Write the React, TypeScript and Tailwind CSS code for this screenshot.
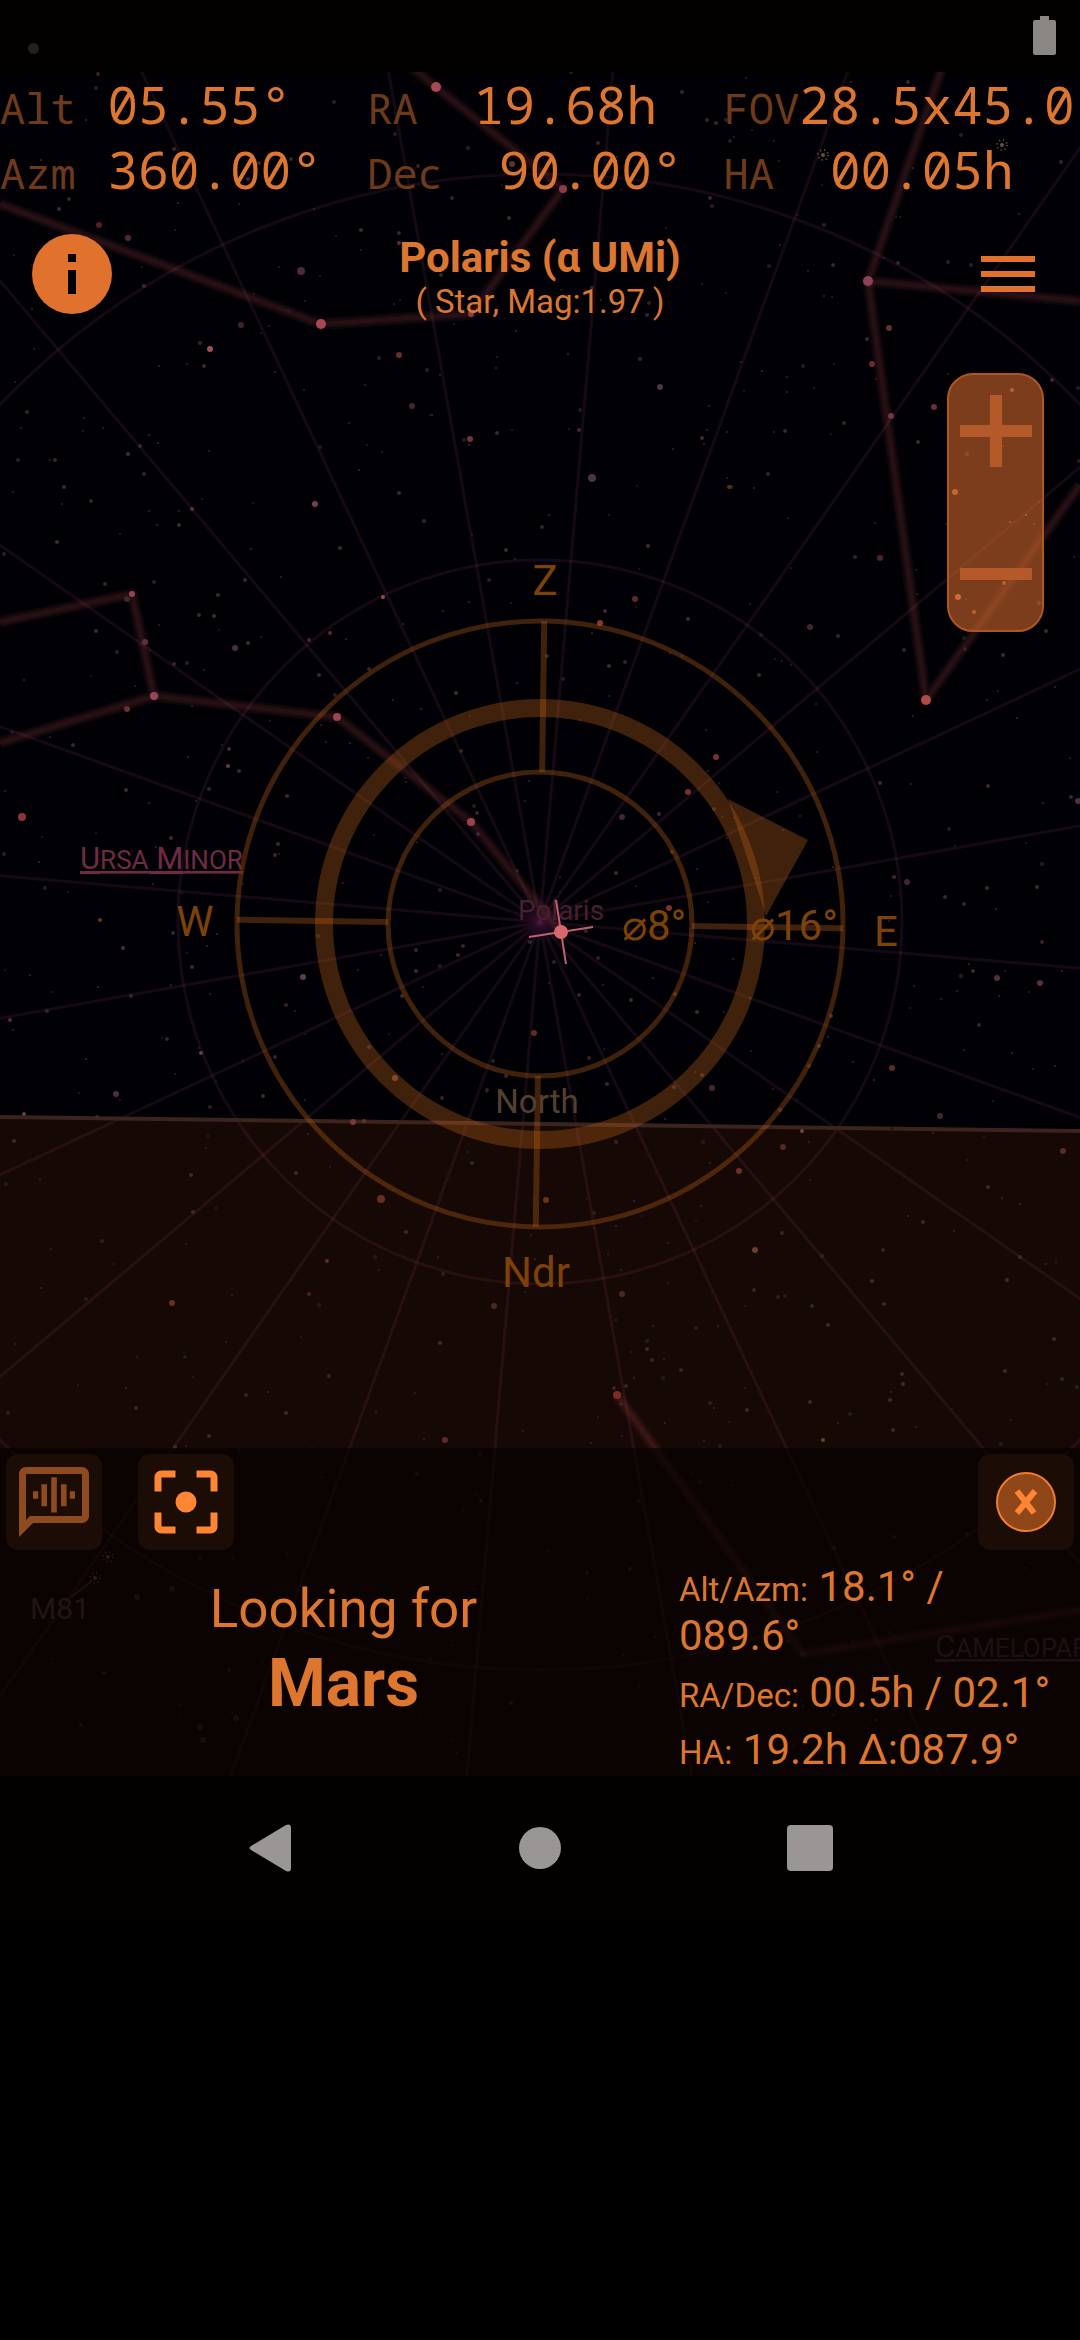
import React from "react";

type Point = [number, number];
type Star = [number, number, number, string?];

const POLE: Point = [540, 922];

const hourLines = Array.from({ length: 24 }, (_, i) => {
  const a = ((4.9 + i * 15) * Math.PI) / 180;
  return [POLE[0] + Math.cos(a) * 1300, POLE[1] + Math.sin(a) * 1300] as Point;
});

const constellations = [
  "405,62 436,87 563,189 471,314 321,324 0,204",
  "943,65 868,281 1080,301",
  "868,281 926,700 1080,485",
  "0,622 132,594 154,696 0,743",
  "154,696 337,717 471,822 561,932",
  "617,1395 803,1654 1080,1610",
];

const brightStars: Star[] = [
  [436, 87, 5, "#a84852"], [563, 189, 4, "#8e3c44"], [471, 314, 3, "#8e3c44"], [321, 324, 5, "#a84852"],
  [868, 281, 5, "#8c4258"], [926, 700, 5, "#b24a48"], [132, 594, 3, "#8e4850"], [154, 696, 4, "#94465a"],
  [337, 717, 4, "#9c4250"], [471, 822, 4, "#9c4250"], [478, 834, 2], [617, 1395, 4, "#7a2c26"],
  [210, 349, 3, "#9a5054"], [22, 817, 4, "#8a3436"], [315, 504, 3, "#70404c"], [383, 597, 2, "#a04a4a"],
  [470, 439, 3, "#70343c"], [412, 406, 3], [399, 355, 3, "#60302c"], [204, 366, 2], [432, 415, 1],
  [301, 271, 4, "#4a2a38"], [128, 238, 3, "#502a34"], [99, 225, 3, "#502222"], [241, 325, 3, "#44202a"],
  [59, 209, 2], [361, 230, 2], [309, 640, 2], [497, 433, 2], [144, 286, 2], [41, 160, 1], [399, 493, 2],
  [340, 548, 2], [399, 243, 2, "#603030"], [509, 218, 2], [512, 164, 3, "#603030"], [248, 179, 2],
  [592, 478, 4, "#4c3444"], [660, 387, 3, "#4c3444"], [889, 328, 3, "#5e3428"], [872, 364, 3, "#6a2c2c"],
  [934, 407, 3, "#6a303a"], [891, 416, 3, "#70384a"], [918, 442, 2], [880, 558, 3, "#4c2430"],
  [635, 599, 3, "#602a2c"], [600, 623, 3, "#84382c"], [605, 611, 2], [810, 627, 3], [688, 619, 2],
  [716, 757, 3, "#7a302c"], [688, 792, 3, "#7a302c"], [659, 814, 2], [622, 817, 3], [616, 873, 2],
  [609, 666, 2], [759, 675, 2], [648, 546, 2], [729, 487, 2, "#5a3020"], [702, 438, 2], [579, 430, 2],
  [1052, 380, 2], [955, 492, 3, "#a06038"], [958, 597, 3, "#c8603c"], [1012, 390, 2, "#985030"],
  [1004, 583, 2, "#985030"], [1010, 522, 1, "#985030"], [1026, 515, 1, "#985030"], [974, 612, 2, "#985030"],
  [1046, 631, 2], [1003, 655, 2], [1078, 801, 3, "#4e3040"], [1071, 797, 2], [880, 783, 2],
  [988, 786, 2], [907, 882, 3], [894, 877, 2], [945, 897, 2], [987, 888, 2], [1037, 887, 2],
  [669, 908, 3, "#7a342c"], [973, 971, 2], [997, 978, 3, "#54303c"], [1040, 983, 3, "#54303c"],
  [892, 1068, 3, "#5e2a2a"], [940, 1116, 3], [712, 1088, 3], [697, 1012, 2], [631, 1000, 2],
  [831, 1016, 2], [819, 1046, 2], [702, 1075, 2], [802, 1131, 2, "#74404a"], [783, 1147, 3, "#58281e"],
  [739, 1171, 3, "#6a3020"], [607, 1084, 2], [534, 1033, 3, "#662a20"], [546, 1200, 3, "#6a3410"],
  [755, 1250, 3, "#6a3c34"], [622, 1294, 3, "#4a2824"], [647, 1349, 2], [884, 1304, 2], [828, 1325, 2],
  [1063, 1151, 3, "#5a2c24"], [988, 1187, 2], [1020, 1257, 2], [1054, 1339, 2], [1007, 1280, 2],
  [902, 1374, 2], [903, 1384, 2], [890, 1400, 2], [893, 1430, 2], [810, 1402, 2], [1005, 1371, 2],
  [747, 1410, 2], [923, 1222, 2], [872, 1281, 2], [303, 977, 3, "#5e3c4c"], [123, 948, 2, "#4c2e38"],
  [116, 1094, 3, "#4c303c"], [100, 920, 2, "#5a3820"], [10, 1020, 2, "#5a2a30"], [192, 967, 2],
  [263, 1096, 2], [353, 1122, 3, "#7a3838"], [364, 1121, 2, "#6a3030"], [395, 1078, 3, "#6a4028"],
  [458, 955, 2], [416, 971, 2], [201, 1053, 2, "#6a4048"], [97, 1117, 2], [24, 1114, 2, "#6a3c40"],
  [381, 1199, 4, "#6a2c22"], [172, 1303, 3, "#6a3018"], [296, 1173, 2], [327, 1261, 2, "#5a3028"],
  [309, 1294, 2, "#4a241a"], [406, 1232, 2], [193, 1212, 2], [494, 1306, 3, "#4a2824"], [136, 1408, 2],
  [440, 1343, 2], [286, 1413, 2], [209, 1436, 2], [14, 1141, 2], [191, 1175, 2], [175, 1447, 2],
  [445, 1440, 3, "#5a2c2c"], [172, 1589, 3, "#3a241e"], [137, 1597, 3, "#3a241e"], [200, 1727, 3, "#38241e"],
  [236, 1718, 3, "#38241e"], [203, 1740, 3, "#38241e"], [104, 1673, 2], [481, 1501, 2], [803, 1654, 3],
  [823, 1440, 2, "#5a4a20"], [235, 648, 3, "#44323c"], [127, 599, 3], [145, 642, 3, "#62303a"],
  [127, 709, 3, "#623030"], [96, 631, 2], [248, 643, 2], [218, 595, 2], [199, 615, 2], [214, 616, 2],
  [330, 633, 2, "#5c2c26"], [228, 766, 2, "#60403c"], [239, 771, 2], [278, 844, 2], [287, 796, 2],
  [171, 838, 2], [126, 790, 2], [456, 693, 2], [506, 550, 2], [57, 542, 2], [64, 487, 2], [128, 454, 2],
  [140, 446, 2], [192, 509, 2, "#5c303c"], [179, 525, 2], [319, 675, 2], [229, 749, 2], [275, 855, 2],
];

function makeFaintStars(count: number): Star[] {
  let seed = 7919;
  const next = () => {
    seed = (seed * 48271) % 2147483647;
    return seed / 2147483647;
  };
  const shades = ["#30282c", "#2a2024", "#3a2226", "#241c20"];
  return Array.from({ length: count }, () => [
    Math.round(next() * 1080),
    Math.round(72 + next() * 1704),
    next() > 0.7 ? 2 : 1,
    shades[Math.floor(next() * 4)],
  ]);
}

const stars = [...makeFaintStars(620), ...brightStars];
const clusters: Point[] = [[823, 155], [1002, 145], [108, 1557], [95, 1578]];

function SkyMap() {
  return (
    <svg
      viewBox="0 72 1080 1704"
      preserveAspectRatio="xMidYMid slice"
      className="absolute inset-0 h-full w-full font-['Roboto',sans-serif]"
      role="img"
      aria-label="Sky map centred on Polaris"
    >
      <defs>
        <radialGradient id="poleGlow">
          <stop offset="0" stopColor="#30082e" stopOpacity="0.6" />
          <stop offset="1" stopColor="#30082e" stopOpacity="0" />
        </radialGradient>
      </defs>
      <rect x="0" y="72" width="1080" height="1704" fill="#010105" />
      <polygon points="0,1117 1080,1131 1080,1776 0,1776" fill="#160804" />

      <g stroke="#944474" strokeOpacity="0.14" strokeWidth="3" fill="none">
        {hourLines.map(([x, y], i) => (
          <line key={i} x1={POLE[0]} y1={POLE[1]} x2={x} y2={y} />
        ))}
        <circle cx={POLE[0]} cy={POLE[1]} r="362" />
        <circle cx={POLE[0]} cy={POLE[1]} r="748" />
      </g>
      <circle cx="540" cy="920" r="28" fill="url(#poleGlow)" />

      <g fill="none" stroke="#a04444" strokeLinejoin="round">
        {constellations.map((points) => (
          <g key={points}>
            <polyline points={points} strokeWidth="12" strokeOpacity="0.09" />
            <polyline points={points} strokeWidth="8" strokeOpacity="0.09" />
            <polyline points={points} strokeWidth="4" strokeOpacity="0.1" />
          </g>
        ))}
      </g>
      <line x1="71" y1="1597" x2="92" y2="1581" stroke="#4a2a20" strokeWidth="2" />

      <line x1="0" y1="1117" x2="1080" y2="1131" stroke="#3c241e" strokeWidth="4" />

      {stars.map(([x, y, r, fill], i) => (
        <circle key={i} cx={x} cy={y} r={r} fill={fill ?? "#40282e"} />
      ))}
      {clusters.map(([x, y]) => (
        <g key={x} stroke="#6e5040" fill="none">
          <circle cx={x} cy={y} r="5" strokeWidth="2" strokeDasharray="1 3" />
          <circle cx={x} cy={y} r="1" strokeWidth="2" />
        </g>
      ))}

      <g fill="none" stroke="#b85e18" strokeOpacity="0.35">
        <circle cx="540" cy="924" r="303" strokeWidth="5" />
        <circle cx="540" cy="924" r="216" strokeWidth="18" />
        <circle cx="540" cy="924" r="152" strokeWidth="5" />
        <g strokeWidth="6" transform="rotate(0.8 540 924)">
          <line x1="540" y1="621" x2="540" y2="772" />
          <line x1="540" y1="1076" x2="540" y2="1227" />
          <line x1="237" y1="924" x2="388" y2="924" />
          <line x1="692" y1="924" x2="843" y2="924" />
        </g>
      </g>
      <polygon points="728,799 808,840 766,916" fill="#b85e18" fillOpacity="0.35" />

      <text x="561" y="920" textAnchor="middle" fontSize="28" fill="#45212c">Polaris</text>
      <g stroke="#c0606e" strokeWidth="2">
        <line x1="556" y1="900" x2="561" y2="932" />
        <line x1="561" y1="932" x2="593" y2="927" />
        <line x1="561" y1="932" x2="566" y2="964" />
        <line x1="529" y1="937" x2="561" y2="932" />
      </g>
      <circle cx="561" cy="932" r="7" fill="#d8686e" />

      <g fill="#7c4208" fontSize="42">
        <text x="545" y="595" textAnchor="middle">Z</text>
        <text x="195" y="936" textAnchor="middle">W</text>
        <text x="886" y="946" textAnchor="middle">E</text>
        <text x="536" y="1287" textAnchor="middle">Ndr</text>
        <text x="622" y="940">⌀8°</text>
        <text x="750" y="940">⌀16°</text>
      </g>
      <text x="537" y="1113" textAnchor="middle" fontSize="33" fill="#54402e">North</text>
      <text x="80" y="869" fontSize="31" fill="#6e2c44" className="underline">
        U<tspan fontSize="26">RSA</tspan> M<tspan fontSize="26">INOR</tspan>
      </text>
      <text x="30" y="1619" fontSize="30" fill="#5a3838">M81</text>
      <text x="935" y="1657" fontSize="31" fill="#4c2a34" className="underline">
        C<tspan fontSize="26">AMELOPARDALIS</tspan>
      </text>
    </svg>
  );
}

function Reading({ label, value, pad }: { label: string; value: string; pad: string }) {
  return (
    <div className="flex h-[65px] items-baseline whitespace-nowrap">
      <dt className="shrink-0 text-[42px] text-[#6e3a1c]">{label}</dt>
      <dd className={pad}>{value}</dd>
    </div>
  );
}

function Coordinates() {
  return (
    <dl className="grid grid-cols-[34fr_33fr_33fr] font-['Droid_Sans_Mono','Noto_Sans_Mono','DejaVu_Sans_Mono',monospace] text-[51px] leading-[65px]">
      <Reading label="Alt" value="05.55°" pad="pl-8" />
      <Reading label="RA" value="19.68h" pad="pl-14" />
      <Reading label="FOV" value="28.5x45.0" pad="pl-0" />
      <Reading label="Azm" value="360.00°" pad="pl-8" />
      <Reading label="Dec" value="90.00°" pad="pl-14" />
      <Reading label="HA" value="00.05h" pad="pl-14" />
    </dl>
  );
}

function ZoomControl() {
  return (
    <div className="mt-[51px] mr-9 flex h-[259px] w-[97px] flex-col self-end rounded-[26px] border-2 border-[#b0561f] bg-[#e0702e]/55 text-[#b3592a]">
      <button aria-label="Zoom in" className="flex flex-1 justify-center pt-5">
        <svg viewBox="0 0 72 72" className="size-[72px]" fill="currentColor">
          <path d="M0 30h30V0h12v30h30v12H42v30H30V42H0z" />
        </svg>
      </button>
      <button aria-label="Zoom out" className="flex flex-1 items-end justify-center pb-5">
        <svg viewBox="0 0 72 72" className="size-[72px]" fill="currentColor">
          <path d="M0 30h72v12H0z" />
        </svg>
      </button>
    </div>
  );
}

function PanelButton({ label, children }: { label: string; children: React.ReactNode }) {
  return (
    <button aria-label={label} className="flex size-24 items-center justify-center rounded-xl bg-[#1b0d06]">
      {children}
    </button>
  );
}

function TargetPanel() {
  return (
    <section className="mt-auto flex h-[328px] flex-col bg-[#040200]/65">
      <div className="flex px-[6px] pt-[6px]">
        <PanelButton label="Voice guidance">
          <svg viewBox="0 0 24 24" className="size-[84px] text-[#8f4a20]" fill="currentColor">
            <path d="M4 4h16v12H5.170L4 17.170V4m0-2c-1.100 0-1.990.9-1.990 2L2 22l4-4h14c1.100 0 2-.9 2-2V4c0-1.100-.9-2-2-2H4z" />
            <path d="M6 8.900h1.500v2.200H6zM8.400 6.900H10v6.300H8.400zM11.200 4.900h1.600v10.100h-1.600zM14 6.900h1.600v6.300H14zM16.500 8.900H18v2.200h-1.500z" />
          </svg>
        </PanelButton>
        <div className="ml-9">
          <PanelButton label="Centre on target">
            <svg viewBox="0 0 24 24" className="size-[84px] text-[#ff8434]" fill="currentColor">
              <path d="M5 15H3v4c0 1.100.9 2 2 2h4v-2H5v-4zM5 5h4V3H5c-1.100 0-2 .9-2 2v4h2V5zm14-2h-4v2h4v4h2V5c0-1.100-.9-2-2-2zm0 16h-4v2h4c1.100 0 2-.9 2-2v-4h-2v4z" />
              <circle cx="12" cy="12" r="3" />
            </svg>
          </PanelButton>
        </div>
        <div className="ml-auto">
          <PanelButton label="Stop looking">
            <svg viewBox="0 0 62 62" className="size-[62px]" fill="none">
              <circle cx="31" cy="31" r="29" fill="#8f4618" stroke="#f07c34" strokeWidth="2" />
              <path d="M22 20 39 42M40 20 22 42" stroke="#ff8434" strokeWidth="6" />
            </svg>
          </PanelButton>
        </div>
      </div>
      <div className="grid flex-1 grid-cols-[679fr_401fr]">
        <div className="pt-6 pl-2 text-center">
          <p className="text-[53px] leading-[70px]">Looking for</p>
          <p className="text-[66px] leading-[80px] font-bold">Mars</p>
        </div>
        <div className="flex flex-col gap-2 pt-3 pr-5 text-[42px] leading-[49px]">
          <p><span className="text-[33px] leading-none">Alt/Azm:</span> 18.1° / 089.6°</p>
          <p><span className="text-[33px] leading-none">RA/Dec:</span> 00.5h / 02.1°</p>
          <p><span className="text-[33px] leading-none">HA:</span> 19.2h Δ:087.9°</p>
        </div>
      </div>
    </section>
  );
}

export default function App() {
  return (
    <div className="min-h-screen bg-black font-['Roboto',sans-serif] text-[#dd762f]">
      <div className="flex h-[72px] items-start justify-between bg-[#030100] px-6 pt-4">
        <span className="mt-[27px] ml-1 size-[11px] rounded-full bg-[#222020]" />
        <svg viewBox="0 0 23 39" className="h-[39px] w-[23px]" fill="#8a8684" role="img" aria-label="Battery full">
          <path d="M7 0h9v4h5a2 2 0 0 1 2 2v31a2 2 0 0 1-2 2H2a2 2 0 0 1-2-2V6a2 2 0 0 1 2-2h5z" />
        </svg>
      </div>

      <main className="relative flex aspect-[1080/1704] flex-col">
        <SkyMap />
        <div className="relative flex flex-1 flex-col">
          <Coordinates />
          <header className="mt-6 flex items-center justify-between px-6 text-[#e0722e]">
            <button aria-label="Object information" className="flex w-24 justify-start">
              <svg viewBox="0 0 24 24" className="size-24" fill="currentColor">
                <circle cx="12" cy="12" r="10" />
                <path d="M11 7h2v2h-2zM11 11h2v6h-2z" fill="#010105" />
              </svg>
            </button>
            <div className="pt-2 text-center text-[#dd762f]">
              <h1 className="text-[42px] leading-[48px] font-bold">Polaris (α UMi)</h1>
              <p className="text-[33px] leading-[40px]">( Star, Mag:1.97 )</p>
            </div>
            <button aria-label="Menu" className="flex w-24 justify-center">
              <svg viewBox="0 0 24 24" className="size-[72px]" fill="currentColor">
                <path d="M3 18h18v-2H3v2zm0-5h18v-2H3v2zm0-7v2h18V6H3z" />
              </svg>
            </button>
          </header>
          <ZoomControl />
          <TargetPanel />
        </div>
      </main>

      <nav className="flex h-36 items-center bg-[#030100] px-[12.5%] text-[#9a9696]">
        <button aria-label="Back" className="flex flex-1 justify-center">
          <svg viewBox="0 0 42 48" className="h-12 w-[42px]" fill="currentColor">
            <path d="M2 22 37 1q5-2 5 3v40q0 5-5 3L2 26q-3-2 0-4z" />
          </svg>
        </button>
        <button aria-label="Home" className="flex flex-1 justify-center">
          <span className="size-[42px] rounded-full bg-current" />
        </button>
        <button aria-label="Recent apps" className="flex flex-1 justify-center">
          <span className="size-[46px] rounded bg-current" />
        </button>
      </nav>
    </div>
  );
}
